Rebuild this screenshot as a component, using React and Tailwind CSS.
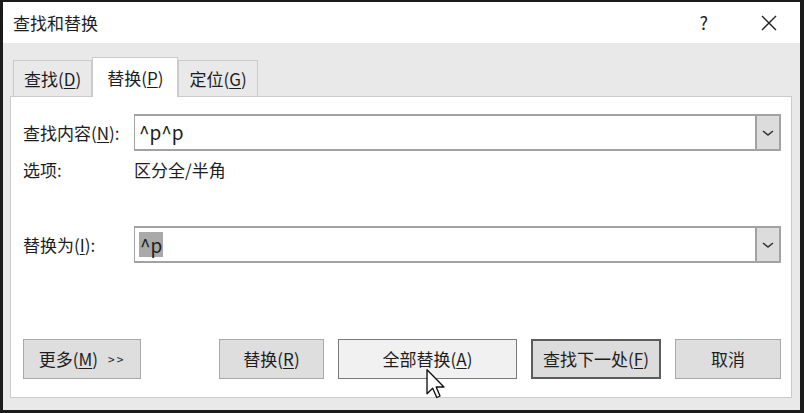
import React from 'react';

const font = { fontFamily: '"Noto Sans CJK SC", "Noto Sans", sans-serif' };

// mnemonic letter, underlined like the Windows dialog
const Key = ({ k }) => (
  <span>
    (<span className="underline underline-offset-2">{k}</span>)
  </span>
);

const Chevron = () => (
  <svg width="12" height="8" viewBox="0 0 12 8">
    <path d="M1 2 L6 6 L11 2" fill="none" stroke="#333" strokeWidth="1.6" />
  </svg>
);

const Combo = ({ children }) => (
  <div className="flex-1 h-[37px] flex border-y-2 border-l border-[#a2a2a2] bg-white">
    <div className="flex-1 flex items-center pl-[4px] text-[19px] text-[#1d1d1d]">{children}</div>
    <div className="w-[26px] -my-[2px] flex items-center justify-center bg-[#dcdcdc] border-2 border-[#a2a2a2]">
      <Chevron />
    </div>
  </div>
);

const Tab = ({ label, k, active }) =>
  active ? (
    <div className="relative z-10 h-[40px] -mb-px px-[14px] flex items-center bg-white border border-b-0 border-[#cbcbcb] text-[17px] text-[#1d1d1d]">
      {label}
      <Key k={k} />
    </div>
  ) : (
    <div className="h-[36px] px-[10px] flex items-center bg-[#e9e9e9] border border-b-0 border-[#cbcbcb] text-[17px] text-[#1d1d1d]">
      {label}
      <Key k={k} />
    </div>
  );

const Button = ({ children, w, variant }) => {
  const styles = {
    normal: 'bg-[#dedede] border border-[#a9a9a9]',
    hover: 'bg-[#f1f1f1] border border-[#7a7a7a]',
    default: 'bg-[#dcdcdc] border-2 border-[#5c5c5c]',
  };
  return (
    <div
      className={`${styles[variant || 'normal']} h-[40px] flex items-center justify-center text-[17px] text-[#1d1d1d]`}
      style={{ width: w }}
    >
      {children}
    </div>
  );
};

const Cursor = () => (
  <svg className="absolute left-[88px] top-[30px]" width="20" height="30" viewBox="0 0 13 20">
    <path
      d="M0.5 0.5 L0.5 16.5 L4.3 12.8 L7 19 L9.2 18 L6.6 12 L11.8 12 Z"
      fill="#fff"
      stroke="#111"
      strokeWidth="0.9"
      strokeLinejoin="round"
    />
  </svg>
);

export default function App() {
  return (
    <div className="w-[804px] h-[413px] bg-[#1b1b1b] pt-[2px] pl-[3px] pr-[4px] pb-[3px]" style={font}>
      <div className="h-full flex flex-col bg-[#e9e9e9]">
        {/* title bar */}
        <div className="h-[41px] bg-white flex items-center pl-[10px] text-[17px] text-[#1d1d1d]">
          <span>查找和替换</span>
          <span className="ml-auto mr-[53px] text-[18px]">?</span>
          <svg className="mr-[23px]" width="16" height="16" viewBox="0 0 16 16">
            <path d="M1 1 L15 15 M15 1 L1 15" stroke="#222" strokeWidth="1.4" />
          </svg>
        </div>

        <div className="flex-1 flex flex-col pl-[7px] pr-[8px] pb-[12px]">
          {/* tabs */}
          <div className="flex items-end pl-[3px] pt-[14px]">
            <Tab label="查找" k="D" />
            <Tab label="替换" k="P" active />
            <Tab label="定位" k="G" />
          </div>

          {/* panel */}
          <div className="flex-1 flex flex-col bg-white border border-[#cbcbcb] pl-[12px] pr-[10px] text-[17px] text-[#1d1d1d]">
            <div className="mt-[17px] flex items-center">
              <div className="w-[111px]">
                查找内容<Key k="N" />:
              </div>
              <Combo>^p^p</Combo>
            </div>

            <div className="mt-[7px] h-[24px] flex items-center">
              <div className="w-[111px]">选项:</div>
              <div>区分全/半角</div>
            </div>

            <div className="mt-[44px] flex items-center">
              <div className="w-[111px]">
                替换为<Key k="I" />:
              </div>
              <Combo>
                <span className="bg-[#a9a9a9] px-[1px] leading-[25px]">^p</span>
              </Combo>
            </div>

            <div className="mt-[76px] flex items-center">
              <Button w="118px">
                <span>
                  更多<Key k="M" />
                </span>
                <span className="ml-[10px] text-[12px] tracking-[2px]">&gt;&gt;</span>
              </Button>
              <div className="ml-auto flex gap-[14px]">
                <Button w="105px">
                  替换<Key k="R" />
                </Button>
                <div className="relative">
                  <Button w="179px" variant="hover">
                    全部替换<Key k="A" />
                  </Button>
                  <Cursor />
                </div>
                <Button w="130px" variant="default">
                  查找下一处<Key k="F" />
                </Button>
                <Button w="106px">取消</Button>
              </div>
            </div>
          </div>
        </div>
      </div>
    </div>
  );
}
